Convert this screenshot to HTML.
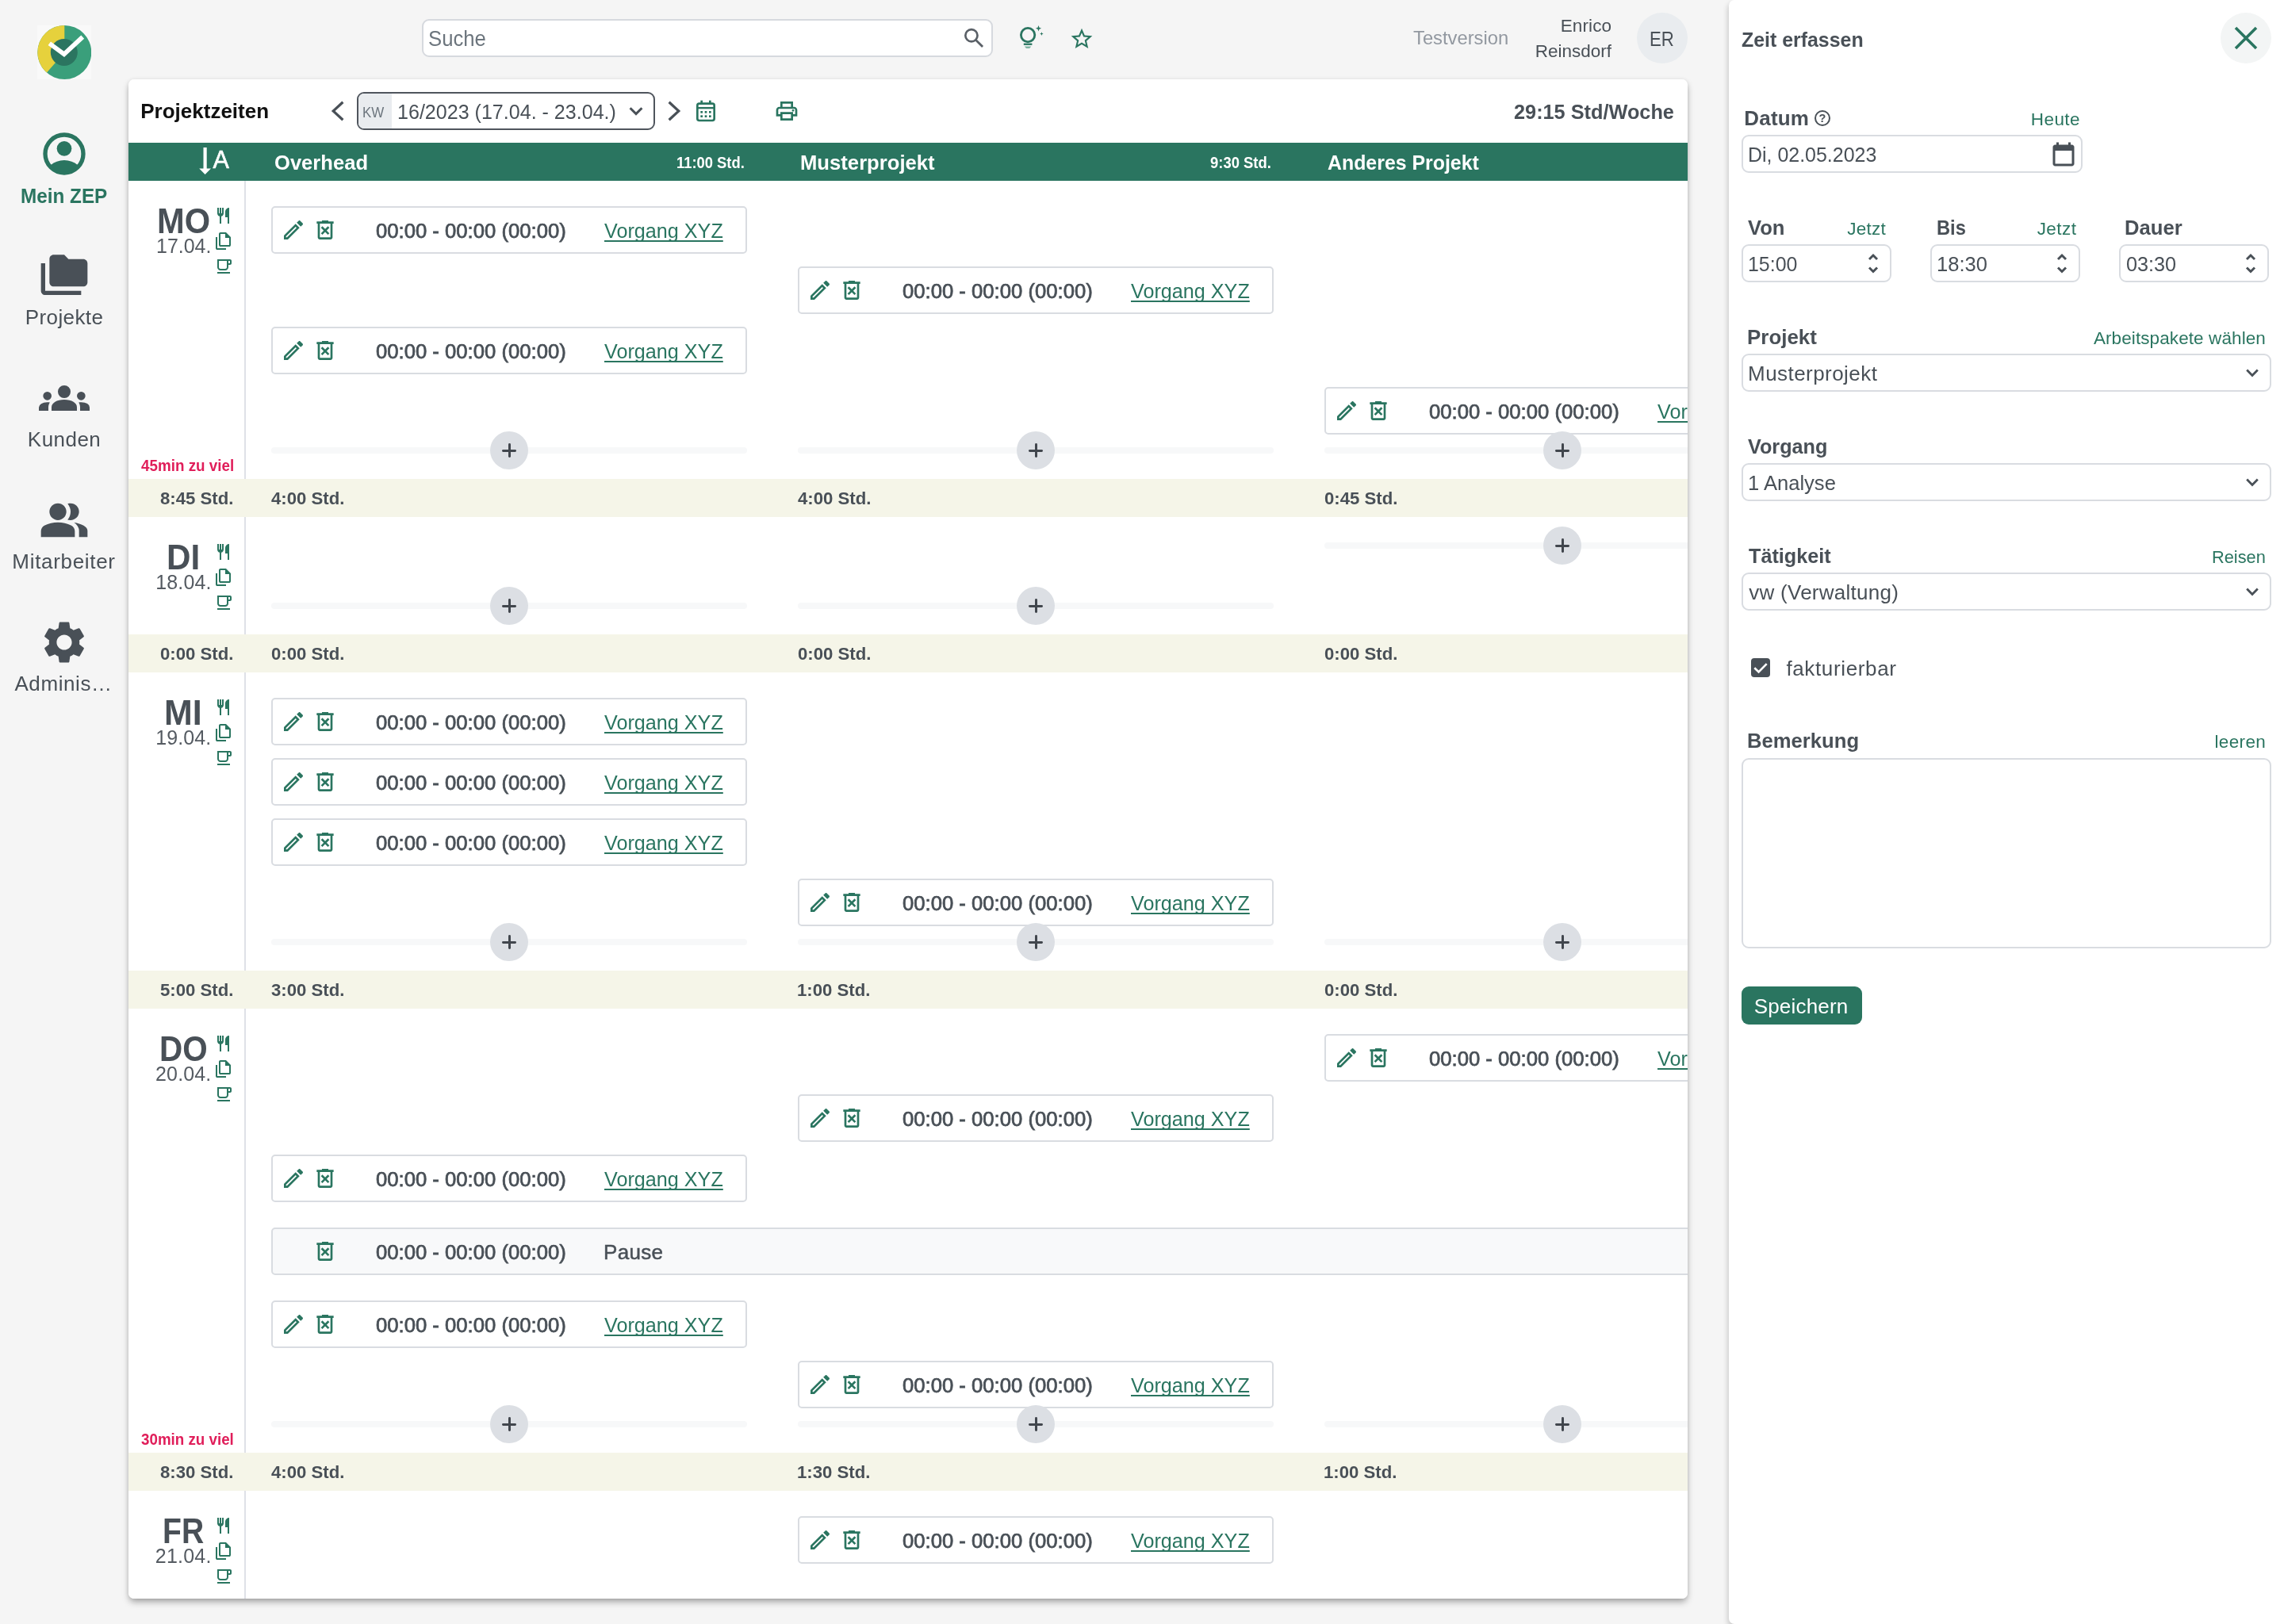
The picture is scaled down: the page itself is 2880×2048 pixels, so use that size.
<!DOCTYPE html>
<html lang="de"><head><meta charset="utf-8"><title>ZEP – Projektzeiten</title>
<style>
html,body{margin:0;padding:0}
body{width:2880px;height:2048px;overflow:hidden;background:#f5f5f5;position:relative;font-family:"Liberation Sans",sans-serif;color:#495057}
.t{position:absolute;white-space:nowrap;line-height:1;margin:0;font-weight:400;transform-origin:0 50%}
a.t{text-decoration:underline;text-decoration-thickness:1.7px;text-underline-offset:3px;text-decoration-skip-ink:none}
#card{position:absolute;left:162px;top:100px;width:1966px;height:1916px;background:#fff;border-radius:7px;overflow:hidden}
#cardsh{position:absolute;left:162px;top:100px;width:1966px;height:1916px;border-radius:7px;box-shadow:0 5px 8px -1px rgba(0,0,0,.34),0 0 5px rgba(0,0,0,.07)}
#sidebar,#topbar{position:absolute;left:0;top:0;width:0;height:0;will-change:transform}
#cardin{will-change:transform;position:absolute;left:-162px;top:-100px;width:2880px;height:2048px}
#panel{position:absolute;left:2180px;top:0;width:700px;height:2048px;background:#fff;border-radius:7px 0 0 7px;box-shadow:-1px 4px 7px rgba(0,0,0,.2)}
#panelin{will-change:transform;position:absolute;left:-2180px;top:0;width:2880px;height:2048px}
.entry{position:absolute;box-sizing:border-box;height:60px;border:2px solid #d9dce1;border-radius:5px;background:#fff}
.pause{background:#f8f9fa}
.sum{position:absolute;left:162px;width:1966px;height:48px;background:#f5f5e8}
.bar{position:absolute;height:8px;border-radius:4px;background:#f7f8f9}
.plus{position:absolute;width:48px;height:48px;border-radius:24px;background:#dcdfe4}
.plus:before,.plus:after{content:"";position:absolute;background:#41464d;border-radius:1.4px}
.plus:before{left:14.7px;top:22.5px;width:18.6px;height:3px}
.plus:after{left:22.5px;top:14.7px;width:3px;height:18.6px}
.inp{position:absolute;box-sizing:border-box;border:2px solid #d9dce1;border-radius:9px;background:#fff}
</style></head><body>

<div id="sidebar">
<svg style="position:absolute;left:47px;top:32px" width="68" height="68" viewBox="0 0 68 68">
<rect width="68" height="68" fill="#f9f9f9"/>
<circle cx="34.3" cy="34" r="34" fill="#3a9f7b"/>
<path d="M34.3 34 L34.3 0 A34 34 0 0 0 12 59.600 Z" fill="#e6d13c"/>
<circle cx="33.8" cy="34" r="17" fill="#2b7560"/>
<path d="M15.300 22.800 L33.800 36.300 L57.200 14.700" fill="none" stroke="#fff" stroke-width="5.700"/>
</svg>
<svg style="position:absolute;left:49px;top:162px;" width="64" height="64" viewBox="0 0 24 24"><circle cx="12" cy="12" r="9" fill="none" stroke="#2a7560" stroke-width="2"/><circle cx="12" cy="9.5" r="3.5" fill="#2a7560"/><clipPath id="acc"><circle cx="12" cy="12" r="8.5"/></clipPath><path clip-path="url(#acc)" d="M5.6 17.3q1.3-1 2.9-1.6Q10.200 15 12 15t3.500.7q1.600.6 2.900 1.600L19 22H5z" fill="#2a7560"/></svg>
<span class="t" style="left:26.36px;top:234px;font-size:26.0px;font-weight:700;color:#2a7560;transform:scaleX(0.9341);">Mein ZEP</span>
<svg style="position:absolute;left:49px;top:316px;" width="64" height="64" viewBox="0 0 24 24"><path d="M3 6H1v13c0 1.100.9 2 2 2h17v-2H3V6z M21 4h-7l-2-2H7c-1.100 0-1.990.9-1.990 2L5 15c0 1.100.9 2 2 2h14c1.100 0 2-.9 2-2V6c0-1.100-.9-2-2-2z" fill="#495057" /></svg>
<span class="t" style="left:31.86px;top:387px;font-size:26px;letter-spacing:0.371px;">Projekte</span>
<svg style="position:absolute;left:49px;top:470px;" width="64" height="64" viewBox="0 0 24 24"><path d="M0 18v-1.575q0-1.075 1.100-1.750Q2.200 14 4 14q.325 0 .625.012.3.013.575.063-.350.525-.525 1.100-.175.575-.175 1.200V18Zm6 0v-1.625q0-.8.438-1.463.437-.662 1.237-1.162T9.588 13q1.112-.250 2.412-.250 1.325 0 2.438.250 1.112.250 1.912.750t1.225 1.162Q18 15.575 18 16.375V18Zm13.500 0v-1.625q0-.650-.162-1.225-.163-.575-.488-1.075.275-.050.563-.063Q19.700 14 20 14q1.800 0 2.900.662 1.100.663 1.100 1.763V18ZM4 13q-.825 0-1.412-.588Q2 11.825 2 11q0-.850.588-1.425Q3.175 9 4 9q.850 0 1.425.575Q6 10.150 6 11q0 .825-.575 1.412Q4.850 13 4 13Zm16 0q-.825 0-1.412-.588Q18 11.825 18 11q0-.850.588-1.425Q19.175 9 20 9q.850 0 1.425.575Q22 10.150 22 11q0 .825-.575 1.412Q20.850 13 20 13Zm-8-1q-1.250 0-2.125-.875T9 9q0-1.275.875-2.138Q10.750 6 12 6q1.275 0 2.138.862Q15 7.725 15 9q0 1.250-.862 2.125Q13.275 12 12 12Z" fill="#495057" /></svg>
<span class="t" style="left:34.85px;top:541px;font-size:26px;letter-spacing:0.467px;">Kunden</span>
<svg style="position:absolute;left:49px;top:624px;" width="64" height="64" viewBox="0 0 24 24"><path d="M1 20v-2.8q0-.850.438-1.563.437-.712 1.162-1.087 1.550-.775 3.150-1.163Q7.350 13 9 13t3.250.387q1.600.388 3.150 1.163.725.375 1.163 1.087Q17 16.350 17 17.200V20Zm18 0v-3q0-1.100-.612-2.113-.613-1.012-1.738-1.737 1.275.150 2.400.512 1.125.363 2.100.888.9.5 1.375 1.112Q23 16.275 23 17v3Zm-10-8q-1.650 0-2.825-1.175Q5 9.650 5 8q0-1.650 1.175-2.825Q7.350 4 9 4q1.650 0 2.825 1.175Q13 6.350 13 8q0 1.650-1.175 2.825Q10.650 12 9 12Zm10-4q0 1.650-1.175 2.825Q16.650 12 15 12q-.275 0-.7-.063-.425-.062-.7-.137.675-.8 1.037-1.775Q15 9.050 15 8q0-1.050-.363-2.025Q14.275 5 13.600 4.200q.350-.125.700-.163Q14.650 4 15 4q1.650 0 2.825 1.175Q19 6.350 19 8Z" fill="#495057" /></svg>
<span class="t" style="left:15.36px;top:695px;font-size:26px;letter-spacing:0.685px;">Mitarbeiter</span>
<svg style="position:absolute;left:49px;top:778px;" width="64" height="64" viewBox="0 0 24 24"><path d="M19.14 12.94c.04-.3.06-.61.06-.94 0-.32-.02-.64-.07-.94l2.030-1.580c.18-.14.23-.41.12-.61l-1.920-3.320c-.12-.22-.37-.29-.59-.22l-2.390.96c-.5-.38-1.030-.7-1.620-.94l-.36-2.540c-.04-.24-.24-.41-.48-.41h-3.840c-.24 0-.43.17-.47.41l-.36 2.540c-.59.24-1.130.57-1.620.94l-2.390-.96c-.22-.08-.47 0-.59.22L2.740 8.870c-.12.21-.08.47.12.61l2.030 1.580c-.05.3-.09.63-.09.94s.02.64.07.94l-2.030 1.580c-.18.14-.23.41-.12.61l1.920 3.320c.12.22.37.29.59.22l2.390-.96c.5.38 1.030.7 1.620.94l.36 2.540c.05.24.24.41.48.41h3.840c.24 0 .44-.17.47-.41l.36-2.540c.59-.24 1.130-.56 1.620-.94l2.390.96c.22.08.47 0 .59-.22l1.920-3.320c.12-.22.07-.47-.12-.61l-2.010-1.580zM12 15.600c-1.980 0-3.600-1.620-3.600-3.600s1.620-3.600 3.600-3.600 3.600 1.620 3.600 3.600-1.620 3.600-3.600 3.600z" fill="#495057" /></svg>
<span class="t" style="left:18.43px;top:849px;font-size:26px;letter-spacing:0.583px;">Adminis…</span>
</div>
<div id="topbar">
<div style="position:absolute;left:532px;top:24px;width:720px;height:48px;box-sizing:border-box;border:2px solid #d6d9de;border-radius:9px;background:#fff"></div>
<span class="t" style="left:539.84px;top:36px;font-size:27px;color:#6c757d;transform:scaleX(0.9517);">Suche</span>
<svg style="position:absolute;left:1212px;top:32px;" width="32" height="32" viewBox="0 0 24 24"><circle cx="9.7" cy="9.6" r="5.7" fill="none" stroke="#5a6067" stroke-width="2"/><path d="M13.9 13.8 L20.3 20.2" stroke="#5a6067" stroke-width="2.1" fill="none"/></svg>
<svg style="position:absolute;left:1280px;top:30px;" width="36" height="36" viewBox="0 0 36 36"><circle cx="16.1" cy="14.1" r="8.7" fill="none" stroke="#2a7560" stroke-width="2.8"/><rect x="10.8" y="24.6" width="10.6" height="2.3" fill="#2a7560"/><path d="M11.8 28.5h8.600l-2.200 2.500h-4.200z" fill="#7db3a1"/><path d="M29.500 2 l1 2.700 2.700 1 -2.700 1 -1 2.700 -1-2.700 -2.700-1 2.700-1z" fill="#2a7560"/><path d="M33.400 10.300 l.65 1.650 1.650.65 -1.650.65 -.65 1.650 -.65-1.650 -1.650-.65 1.650-.65z" fill="#2a7560"/></svg>
<svg style="position:absolute;left:1348px;top:33px;" width="32" height="32" viewBox="0 0 24 24"><path d="M22 9.24l-7.190-.62L12 2 9.190 8.630 2 9.240l5.460 4.730L5.820 21 12 17.270 18.180 21l-1.630-7.030L22 9.240zM12 15.400l-3.760 2.270 1-4.280-3.320-2.880 4.380-.38L12 6.100l1.710 4.040 4.380.38-3.320 2.880 1 4.280L12 15.400z" fill="#2a7560" /></svg>
<span class="t" style="left:1782.47px;top:36px;font-size:24px;color:#9298a0;transform:scaleX(0.9904);">Testversion</span>
<span class="t" style="left:1967.74px;top:22px;font-size:22.5px;letter-spacing:0.125px;">Enrico</span>
<span class="t" style="left:1935.64px;top:54px;font-size:22.5px;letter-spacing:0.025px;">Reinsdorf</span>
<div style="position:absolute;left:2064px;top:16px;width:64px;height:64px;border-radius:32px;background:#e9ecef"></div>
<span class="t" style="left:2079.57px;top:37px;font-size:25px;transform:scaleX(0.8889);">ER</span>
</div>
<div id="cardsh"></div><div id="card"><div id="cardin">
<span class="t" style="left:177.25px;top:127px;font-size:26.0px;font-weight:700;color:#111;">Projektzeiten</span>
<svg style="position:absolute;left:414px;top:124px;" width="24" height="32" viewBox="0 0 24 32"><path d="M18.400 4.800 L6.200 16 L18.400 27.200" fill="none" stroke="#495057" stroke-width="3.2"/></svg>
<svg style="position:absolute;left:838px;top:124px;" width="24" height="32" viewBox="0 0 24 32"><path d="M5.600 4.800 L17.800 16 L5.600 27.200" fill="none" stroke="#495057" stroke-width="3.2"/></svg>
<div style="position:absolute;left:450px;top:116px;width:376px;height:48px;box-sizing:border-box;border:2px solid #4f555d;border-radius:9px;overflow:hidden;background:#fff"><div style="position:absolute;left:0;top:0;width:42px;height:44px;background:#e9ecef"></div></div>
<span class="t" style="left:457.40px;top:132px;font-size:19px;color:#6c757d;transform:scaleX(0.8904);">KW</span>
<span class="t" style="left:501.12px;top:128px;font-size:26px;transform:scaleX(0.9640);">16/2023 (17.04. - 23.04.)</span>
<svg style="position:absolute;left:790px;top:128px;" width="24" height="24" viewBox="0 0 24 24"><path d="M4.600 8.200 L12 15.600 L19.400 8.200" fill="none" stroke="#495057" stroke-width="3"/></svg>
<svg style="position:absolute;left:874px;top:124px;" width="32" height="32" viewBox="0 0 24 24"><rect x="4" y="5" width="16" height="16" rx="1.800" fill="none" stroke="#2a7560" stroke-width="2"/><rect x="4" y="8.200" width="16" height="1.800" fill="#2a7560"/><rect x="7" y="2" width="2" height="4" fill="#2a7560"/><rect x="15" y="2" width="2" height="4" fill="#2a7560"/><rect x="7" y="12" width="2" height="2" fill="#2a7560"/><rect x="11" y="12" width="2" height="2" fill="#2a7560"/><rect x="15" y="12" width="2" height="2" fill="#2a7560"/><rect x="7" y="16" width="2" height="2" fill="#2a7560"/><rect x="11" y="16" width="2" height="2" fill="#2a7560"/><rect x="15" y="16" width="2" height="2" fill="#2a7560"/></svg>
<svg style="position:absolute;left:976px;top:124px;" width="32" height="32" viewBox="0 0 24 24"><path d="M19 8h-1V3H6v5H5c-1.660 0-3 1.340-3 3v6h4v4h12v-4h4v-6c0-1.660-1.340-3-3-3zM8 5h8v3H8V5zm8 12v2H8v-4h8v2zm2-2v-2H6v2H4v-4c0-.550.450-1 1-1h14c.550 0 1 .450 1 1v4h-2z" fill="#2a7560" /><circle cx="18" cy="11.500" r="1" fill="#2a7560"/></svg>
<span class="t" style="left:1909.41px;top:128px;font-size:26.0px;font-weight:700;transform:scaleX(0.9728);">29:15 Std/Woche</span>
<div style="position:absolute;left:162px;top:180px;width:1966px;height:48px;background:#2a7560"></div>
<svg style="position:absolute;left:247.6px;top:184px;" width="20" height="38" viewBox="0 0 20 38"><path d="M8.500 2h4.200v26.500h5.300L10.600 36 3.200 28.500h5.300z" fill="#fff"/></svg>
<span class="t" style="left:268.52px;top:186px;font-size:30.5px;color:#fff;-webkit-text-stroke:0.6px currentColor;">A</span>
<span class="t" style="left:345.68px;top:192px;font-size:26.0px;font-weight:700;color:#fff;transform:scaleX(0.9838);">Overhead</span>
<span class="t" style="left:852.85px;top:196px;font-size:19.5px;font-weight:700;color:#fff;transform:scaleX(0.9421);">11:00 Std.</span>
<span class="t" style="left:1009.27px;top:192px;font-size:26.0px;font-weight:700;color:#fff;transform:scaleX(0.9868);">Musterprojekt</span>
<span class="t" style="left:1526.35px;top:196px;font-size:19.5px;font-weight:700;color:#fff;transform:scaleX(0.9462);">9:30 Std.</span>
<span class="t" style="left:1673.68px;top:192px;font-size:26.0px;font-weight:700;color:#fff;transform:scaleX(0.9569);">Anderes Projekt</span>
<div style="position:absolute;left:308px;top:228px;width:2px;height:1800px;background:#dfe1e7"></div>
<span class="t" style="left:197.69px;top:256px;font-size:45.0px;font-weight:700;transform:scaleX(0.9259);">MO</span>
<span class="t" style="left:196.63px;top:298px;font-size:25px;color:#555b62;transform:scaleX(0.9989);">17.04.</span>
<svg style="position:absolute;left:270px;top:260px;" width="24" height="24" viewBox="0 0 24 24"><path d="M7 22v-9.15q-1.275-.35-2.137-1.4Q4 10.4 4 9V2h2v7h1V2h2v7h1V2h2v7q0 1.4-.863 2.450Q10.275 12.500 9 12.850V22Zm10 0v-8h-3V7q0-2.075 1.463-3.537Q16.925 2 19 2v20Z" fill="#2a7560" /></svg>
<svg style="position:absolute;left:270px;top:292px;" width="24" height="24" viewBox="0 0 24 24"><path d="M8 1h7l6 6v10q0 .83-.59 1.410Q19.830 19 19 19H8q-.830 0-1.410-.590Q6 17.830 6 17V3q0-.830.590-1.410Q7.170 1 8 1zm0 2v14h11V8h-5V3zM2 7h2v14h11v2H4q-.830 0-1.410-.590Q2 21.830 2 21z" fill="#2a7560" /></svg>
<svg style="position:absolute;left:270px;top:324px;" width="24" height="24" viewBox="0 0 24 24"><path d="M4 19h16v2H4zM20 3H4v10c0 2.210 1.790 4 4 4h6c2.210 0 4-1.790 4-4v-3h2c1.110 0 2-.9 2-2V5c0-1.110-.890-2-2-2zm-4 10c0 1.100-.9 2-2 2H8c-1.100 0-2-.9-2-2V5h10v8zm4-5h-2V5h2v3z" fill="#2a7560" /></svg>
<div class="entry" style="left:342px;top:260px;width:600px"></div>
<svg style="position:absolute;left:354px;top:274px;" width="32" height="32" viewBox="0 0 24 24"><path d="M14.06 9.02l.92.92L5.92 19H5v-.92l9.06-9.06M17.66 3c-.25 0-.51.1-.7.29l-1.83 1.83 3.75 3.75 1.83-1.83c.39-.39.39-1.02 0-1.41l-2.34-2.34c-.2-.2-.45-.29-.71-.29zm-3.6 3.19L3 17.25V21h3.75L17.81 9.94l-3.75-3.75z" fill="#2a7560" /></svg>
<svg style="position:absolute;left:394px;top:274px;" width="32" height="32" viewBox="0 0 24 24"><path d="M9 3h6v1h5v2h-1v13q0 .83-.59 1.41Q17.83 21 17 21H7q-.83 0-1.41-.59Q5 19.830 5 19V6H4V4h5zM7 6v13h10V6zM9.4 16.5L8 15.1l2.6-2.6L8 9.9l1.4-1.4 2.6 2.6 2.6-2.6L16 9.900l-2.600 2.600 2.600 2.600-1.400 1.400-2.600-2.600z" fill="#2a7560" /></svg>
<span class="t" style="left:473.74px;top:278px;font-size:26px;transform:scaleX(0.9872);-webkit-text-stroke:0.75px currentColor;">00:00 - 00:00 (00:00)</span>
<a class="t" style="left:761.87px;top:278px;font-size:26px;color:#2a7560;transform:scaleX(0.9686);">Vorgang XYZ</a>
<div class="entry" style="left:1006px;top:336px;width:600px"></div>
<svg style="position:absolute;left:1018px;top:350px;" width="32" height="32" viewBox="0 0 24 24"><path d="M14.06 9.02l.92.92L5.92 19H5v-.92l9.06-9.06M17.66 3c-.25 0-.51.1-.7.29l-1.83 1.83 3.75 3.75 1.83-1.83c.39-.39.39-1.02 0-1.41l-2.34-2.34c-.2-.2-.45-.29-.71-.29zm-3.6 3.19L3 17.25V21h3.75L17.81 9.94l-3.75-3.75z" fill="#2a7560" /></svg>
<svg style="position:absolute;left:1058px;top:350px;" width="32" height="32" viewBox="0 0 24 24"><path d="M9 3h6v1h5v2h-1v13q0 .83-.59 1.41Q17.83 21 17 21H7q-.83 0-1.41-.59Q5 19.830 5 19V6H4V4h5zM7 6v13h10V6zM9.4 16.5L8 15.1l2.6-2.6L8 9.9l1.4-1.4 2.6 2.6 2.6-2.6L16 9.900l-2.600 2.600 2.600 2.600-1.400 1.400-2.600-2.600z" fill="#2a7560" /></svg>
<span class="t" style="left:1137.74px;top:354px;font-size:26px;transform:scaleX(0.9872);-webkit-text-stroke:0.75px currentColor;">00:00 - 00:00 (00:00)</span>
<a class="t" style="left:1425.87px;top:354px;font-size:26px;color:#2a7560;transform:scaleX(0.9686);">Vorgang XYZ</a>
<div class="entry" style="left:342px;top:412px;width:600px"></div>
<svg style="position:absolute;left:354px;top:426px;" width="32" height="32" viewBox="0 0 24 24"><path d="M14.06 9.02l.92.92L5.92 19H5v-.92l9.06-9.06M17.66 3c-.25 0-.51.1-.7.29l-1.83 1.83 3.75 3.75 1.83-1.83c.39-.39.39-1.02 0-1.41l-2.34-2.34c-.2-.2-.45-.29-.71-.29zm-3.6 3.19L3 17.25V21h3.75L17.81 9.94l-3.75-3.75z" fill="#2a7560" /></svg>
<svg style="position:absolute;left:394px;top:426px;" width="32" height="32" viewBox="0 0 24 24"><path d="M9 3h6v1h5v2h-1v13q0 .83-.59 1.41Q17.83 21 17 21H7q-.83 0-1.41-.59Q5 19.830 5 19V6H4V4h5zM7 6v13h10V6zM9.4 16.5L8 15.1l2.6-2.6L8 9.9l1.4-1.4 2.6 2.6 2.6-2.6L16 9.900l-2.600 2.600 2.600 2.600-1.400 1.400-2.600-2.600z" fill="#2a7560" /></svg>
<span class="t" style="left:473.74px;top:430px;font-size:26px;transform:scaleX(0.9872);-webkit-text-stroke:0.75px currentColor;">00:00 - 00:00 (00:00)</span>
<a class="t" style="left:761.87px;top:430px;font-size:26px;color:#2a7560;transform:scaleX(0.9686);">Vorgang XYZ</a>
<div class="entry" style="left:1670px;top:488px;width:600px"></div>
<svg style="position:absolute;left:1682px;top:502px;" width="32" height="32" viewBox="0 0 24 24"><path d="M14.06 9.02l.92.92L5.92 19H5v-.92l9.06-9.06M17.66 3c-.25 0-.51.1-.7.29l-1.83 1.83 3.75 3.75 1.83-1.83c.39-.39.39-1.02 0-1.41l-2.34-2.34c-.2-.2-.45-.29-.71-.29zm-3.6 3.19L3 17.25V21h3.75L17.81 9.94l-3.75-3.75z" fill="#2a7560" /></svg>
<svg style="position:absolute;left:1722px;top:502px;" width="32" height="32" viewBox="0 0 24 24"><path d="M9 3h6v1h5v2h-1v13q0 .83-.59 1.41Q17.83 21 17 21H7q-.83 0-1.41-.59Q5 19.830 5 19V6H4V4h5zM7 6v13h10V6zM9.4 16.5L8 15.1l2.6-2.6L8 9.9l1.4-1.4 2.6 2.6 2.6-2.6L16 9.900l-2.600 2.600 2.600 2.600-1.400 1.400-2.600-2.600z" fill="#2a7560" /></svg>
<span class="t" style="left:1801.74px;top:506px;font-size:26px;transform:scaleX(0.9872);-webkit-text-stroke:0.75px currentColor;">00:00 - 00:00 (00:00)</span>
<a class="t" style="left:2089.87px;top:506px;font-size:26px;color:#2a7560;transform:scaleX(0.9686);">Vorgang XYZ</a>
<div class="bar" style="left:342px;top:564px;width:600px"></div>
<div class="plus" style="left:618px;top:544px"></div>
<div class="bar" style="left:1006px;top:564px;width:600px"></div>
<div class="plus" style="left:1282px;top:544px"></div>
<div class="bar" style="left:1670px;top:564px;width:600px"></div>
<div class="plus" style="left:1946px;top:544px"></div>
<span class="t" style="left:178.12px;top:578px;font-size:19.5px;font-weight:700;color:#e01e5a;transform:scaleX(0.9655);">45min zu viel</span>
<div class="sum" style="top:604px"></div>
<span class="t" style="left:202.13px;top:618px;font-size:22.5px;font-weight:700;transform:scaleX(0.9850);">8:45 Std.</span>
<span class="t" style="left:342.37px;top:618px;font-size:22.5px;font-weight:700;transform:scaleX(0.9850);">4:00 Std.</span>
<span class="t" style="left:1006.37px;top:618px;font-size:22.5px;font-weight:700;transform:scaleX(0.9850);">4:00 Std.</span>
<span class="t" style="left:1669.81px;top:618px;font-size:22.5px;font-weight:700;transform:scaleX(0.9850);">0:45 Std.</span>
<span class="t" style="left:209.65px;top:680px;font-size:45.0px;font-weight:700;transform:scaleX(0.9377);">DI</span>
<span class="t" style="left:196.32px;top:722px;font-size:25px;color:#555b62;letter-spacing:0.125px;">18.04.</span>
<svg style="position:absolute;left:270px;top:684px;" width="24" height="24" viewBox="0 0 24 24"><path d="M7 22v-9.15q-1.275-.35-2.137-1.4Q4 10.4 4 9V2h2v7h1V2h2v7h1V2h2v7q0 1.4-.863 2.450Q10.275 12.500 9 12.850V22Zm10 0v-8h-3V7q0-2.075 1.463-3.537Q16.925 2 19 2v20Z" fill="#2a7560" /></svg>
<svg style="position:absolute;left:270px;top:716px;" width="24" height="24" viewBox="0 0 24 24"><path d="M8 1h7l6 6v10q0 .83-.59 1.410Q19.830 19 19 19H8q-.830 0-1.410-.590Q6 17.830 6 17V3q0-.830.590-1.410Q7.170 1 8 1zm0 2v14h11V8h-5V3zM2 7h2v14h11v2H4q-.830 0-1.410-.590Q2 21.830 2 21z" fill="#2a7560" /></svg>
<svg style="position:absolute;left:270px;top:748px;" width="24" height="24" viewBox="0 0 24 24"><path d="M4 19h16v2H4zM20 3H4v10c0 2.210 1.790 4 4 4h6c2.210 0 4-1.790 4-4v-3h2c1.110 0 2-.9 2-2V5c0-1.110-.890-2-2-2zm-4 10c0 1.100-.9 2-2 2H8c-1.100 0-2-.9-2-2V5h10v8zm4-5h-2V5h2v3z" fill="#2a7560" /></svg>
<div class="bar" style="left:1670px;top:684px;width:600px"></div>
<div class="plus" style="left:1946px;top:664px"></div>
<div class="bar" style="left:342px;top:760px;width:600px"></div>
<div class="plus" style="left:618px;top:740px"></div>
<div class="bar" style="left:1006px;top:760px;width:600px"></div>
<div class="plus" style="left:1282px;top:740px"></div>
<div class="sum" style="top:800px"></div>
<span class="t" style="left:202.13px;top:814px;font-size:22.5px;font-weight:700;transform:scaleX(0.9850);">0:00 Std.</span>
<span class="t" style="left:341.81px;top:814px;font-size:22.5px;font-weight:700;transform:scaleX(0.9850);">0:00 Std.</span>
<span class="t" style="left:1005.81px;top:814px;font-size:22.5px;font-weight:700;transform:scaleX(0.9850);">0:00 Std.</span>
<span class="t" style="left:1669.81px;top:814px;font-size:22.5px;font-weight:700;transform:scaleX(0.9850);">0:00 Std.</span>
<span class="t" style="left:207.21px;top:876px;font-size:45.0px;font-weight:700;transform:scaleX(0.9527);">MI</span>
<span class="t" style="left:196.22px;top:918px;font-size:25px;color:#555b62;letter-spacing:0.105px;">19.04.</span>
<svg style="position:absolute;left:270px;top:880px;" width="24" height="24" viewBox="0 0 24 24"><path d="M7 22v-9.15q-1.275-.35-2.137-1.4Q4 10.4 4 9V2h2v7h1V2h2v7h1V2h2v7q0 1.4-.863 2.450Q10.275 12.500 9 12.850V22Zm10 0v-8h-3V7q0-2.075 1.463-3.537Q16.925 2 19 2v20Z" fill="#2a7560" /></svg>
<svg style="position:absolute;left:270px;top:912px;" width="24" height="24" viewBox="0 0 24 24"><path d="M8 1h7l6 6v10q0 .83-.59 1.410Q19.830 19 19 19H8q-.830 0-1.410-.590Q6 17.830 6 17V3q0-.830.590-1.410Q7.170 1 8 1zm0 2v14h11V8h-5V3zM2 7h2v14h11v2H4q-.830 0-1.410-.590Q2 21.830 2 21z" fill="#2a7560" /></svg>
<svg style="position:absolute;left:270px;top:944px;" width="24" height="24" viewBox="0 0 24 24"><path d="M4 19h16v2H4zM20 3H4v10c0 2.210 1.790 4 4 4h6c2.210 0 4-1.790 4-4v-3h2c1.110 0 2-.9 2-2V5c0-1.110-.890-2-2-2zm-4 10c0 1.100-.9 2-2 2H8c-1.100 0-2-.9-2-2V5h10v8zm4-5h-2V5h2v3z" fill="#2a7560" /></svg>
<div class="entry" style="left:342px;top:880px;width:600px"></div>
<svg style="position:absolute;left:354px;top:894px;" width="32" height="32" viewBox="0 0 24 24"><path d="M14.06 9.02l.92.92L5.92 19H5v-.92l9.06-9.06M17.66 3c-.25 0-.51.1-.7.29l-1.83 1.83 3.75 3.75 1.83-1.83c.39-.39.39-1.02 0-1.41l-2.34-2.34c-.2-.2-.45-.29-.71-.29zm-3.6 3.19L3 17.25V21h3.75L17.81 9.94l-3.75-3.75z" fill="#2a7560" /></svg>
<svg style="position:absolute;left:394px;top:894px;" width="32" height="32" viewBox="0 0 24 24"><path d="M9 3h6v1h5v2h-1v13q0 .83-.59 1.41Q17.83 21 17 21H7q-.83 0-1.41-.59Q5 19.830 5 19V6H4V4h5zM7 6v13h10V6zM9.4 16.5L8 15.1l2.6-2.6L8 9.9l1.4-1.4 2.6 2.6 2.6-2.6L16 9.900l-2.600 2.600 2.600 2.600-1.400 1.400-2.600-2.600z" fill="#2a7560" /></svg>
<span class="t" style="left:473.74px;top:898px;font-size:26px;transform:scaleX(0.9872);-webkit-text-stroke:0.75px currentColor;">00:00 - 00:00 (00:00)</span>
<a class="t" style="left:761.87px;top:898px;font-size:26px;color:#2a7560;transform:scaleX(0.9686);">Vorgang XYZ</a>
<div class="entry" style="left:342px;top:956px;width:600px"></div>
<svg style="position:absolute;left:354px;top:970px;" width="32" height="32" viewBox="0 0 24 24"><path d="M14.06 9.02l.92.92L5.92 19H5v-.92l9.06-9.06M17.66 3c-.25 0-.51.1-.7.29l-1.83 1.83 3.75 3.75 1.83-1.83c.39-.39.39-1.02 0-1.41l-2.34-2.34c-.2-.2-.45-.29-.71-.29zm-3.6 3.19L3 17.25V21h3.75L17.81 9.94l-3.75-3.75z" fill="#2a7560" /></svg>
<svg style="position:absolute;left:394px;top:970px;" width="32" height="32" viewBox="0 0 24 24"><path d="M9 3h6v1h5v2h-1v13q0 .83-.59 1.41Q17.83 21 17 21H7q-.83 0-1.41-.59Q5 19.830 5 19V6H4V4h5zM7 6v13h10V6zM9.4 16.5L8 15.1l2.6-2.6L8 9.9l1.4-1.4 2.6 2.6 2.6-2.6L16 9.900l-2.600 2.600 2.600 2.600-1.400 1.400-2.600-2.600z" fill="#2a7560" /></svg>
<span class="t" style="left:473.74px;top:974px;font-size:26px;transform:scaleX(0.9872);-webkit-text-stroke:0.75px currentColor;">00:00 - 00:00 (00:00)</span>
<a class="t" style="left:761.87px;top:974px;font-size:26px;color:#2a7560;transform:scaleX(0.9686);">Vorgang XYZ</a>
<div class="entry" style="left:342px;top:1032px;width:600px"></div>
<svg style="position:absolute;left:354px;top:1046px;" width="32" height="32" viewBox="0 0 24 24"><path d="M14.06 9.02l.92.92L5.92 19H5v-.92l9.06-9.06M17.66 3c-.25 0-.51.1-.7.29l-1.83 1.83 3.75 3.75 1.83-1.83c.39-.39.39-1.02 0-1.41l-2.34-2.34c-.2-.2-.45-.29-.71-.29zm-3.6 3.19L3 17.25V21h3.75L17.81 9.94l-3.75-3.75z" fill="#2a7560" /></svg>
<svg style="position:absolute;left:394px;top:1046px;" width="32" height="32" viewBox="0 0 24 24"><path d="M9 3h6v1h5v2h-1v13q0 .83-.59 1.41Q17.83 21 17 21H7q-.83 0-1.41-.59Q5 19.830 5 19V6H4V4h5zM7 6v13h10V6zM9.4 16.5L8 15.1l2.6-2.6L8 9.9l1.4-1.4 2.6 2.6 2.6-2.6L16 9.900l-2.600 2.600 2.600 2.600-1.400 1.400-2.600-2.600z" fill="#2a7560" /></svg>
<span class="t" style="left:473.74px;top:1050px;font-size:26px;transform:scaleX(0.9872);-webkit-text-stroke:0.75px currentColor;">00:00 - 00:00 (00:00)</span>
<a class="t" style="left:761.87px;top:1050px;font-size:26px;color:#2a7560;transform:scaleX(0.9686);">Vorgang XYZ</a>
<div class="entry" style="left:1006px;top:1108px;width:600px"></div>
<svg style="position:absolute;left:1018px;top:1122px;" width="32" height="32" viewBox="0 0 24 24"><path d="M14.06 9.02l.92.92L5.92 19H5v-.92l9.06-9.06M17.66 3c-.25 0-.51.1-.7.29l-1.83 1.83 3.75 3.75 1.83-1.83c.39-.39.39-1.02 0-1.41l-2.34-2.34c-.2-.2-.45-.29-.71-.29zm-3.6 3.19L3 17.25V21h3.75L17.81 9.94l-3.75-3.75z" fill="#2a7560" /></svg>
<svg style="position:absolute;left:1058px;top:1122px;" width="32" height="32" viewBox="0 0 24 24"><path d="M9 3h6v1h5v2h-1v13q0 .83-.59 1.41Q17.83 21 17 21H7q-.83 0-1.41-.59Q5 19.830 5 19V6H4V4h5zM7 6v13h10V6zM9.4 16.5L8 15.1l2.6-2.6L8 9.9l1.4-1.4 2.6 2.6 2.6-2.6L16 9.900l-2.600 2.600 2.600 2.600-1.400 1.400-2.600-2.600z" fill="#2a7560" /></svg>
<span class="t" style="left:1137.74px;top:1126px;font-size:26px;transform:scaleX(0.9872);-webkit-text-stroke:0.75px currentColor;">00:00 - 00:00 (00:00)</span>
<a class="t" style="left:1425.87px;top:1126px;font-size:26px;color:#2a7560;transform:scaleX(0.9686);">Vorgang XYZ</a>
<div class="bar" style="left:342px;top:1184px;width:600px"></div>
<div class="plus" style="left:618px;top:1164px"></div>
<div class="bar" style="left:1006px;top:1184px;width:600px"></div>
<div class="plus" style="left:1282px;top:1164px"></div>
<div class="bar" style="left:1670px;top:1184px;width:600px"></div>
<div class="plus" style="left:1946px;top:1164px"></div>
<div class="sum" style="top:1224px"></div>
<span class="t" style="left:202.13px;top:1238px;font-size:22.5px;font-weight:700;transform:scaleX(0.9850);">5:00 Std.</span>
<span class="t" style="left:342.20px;top:1238px;font-size:22.5px;font-weight:700;transform:scaleX(0.9850);">3:00 Std.</span>
<span class="t" style="left:1005.31px;top:1238px;font-size:22.5px;font-weight:700;transform:scaleX(0.9850);">1:00 Std.</span>
<span class="t" style="left:1669.81px;top:1238px;font-size:22.5px;font-weight:700;transform:scaleX(0.9850);">0:00 Std.</span>
<span class="t" style="left:200.87px;top:1300px;font-size:45.0px;font-weight:700;transform:scaleX(0.8985);">DO</span>
<span class="t" style="left:196.05px;top:1342px;font-size:25px;color:#555b62;letter-spacing:0.140px;">20.04.</span>
<svg style="position:absolute;left:270px;top:1304px;" width="24" height="24" viewBox="0 0 24 24"><path d="M7 22v-9.15q-1.275-.35-2.137-1.4Q4 10.4 4 9V2h2v7h1V2h2v7h1V2h2v7q0 1.4-.863 2.450Q10.275 12.500 9 12.850V22Zm10 0v-8h-3V7q0-2.075 1.463-3.537Q16.925 2 19 2v20Z" fill="#2a7560" /></svg>
<svg style="position:absolute;left:270px;top:1336px;" width="24" height="24" viewBox="0 0 24 24"><path d="M8 1h7l6 6v10q0 .83-.59 1.410Q19.830 19 19 19H8q-.830 0-1.410-.590Q6 17.830 6 17V3q0-.830.590-1.410Q7.170 1 8 1zm0 2v14h11V8h-5V3zM2 7h2v14h11v2H4q-.830 0-1.410-.590Q2 21.830 2 21z" fill="#2a7560" /></svg>
<svg style="position:absolute;left:270px;top:1368px;" width="24" height="24" viewBox="0 0 24 24"><path d="M4 19h16v2H4zM20 3H4v10c0 2.210 1.790 4 4 4h6c2.210 0 4-1.790 4-4v-3h2c1.110 0 2-.9 2-2V5c0-1.110-.890-2-2-2zm-4 10c0 1.100-.9 2-2 2H8c-1.100 0-2-.9-2-2V5h10v8zm4-5h-2V5h2v3z" fill="#2a7560" /></svg>
<div class="entry" style="left:1670px;top:1304px;width:600px"></div>
<svg style="position:absolute;left:1682px;top:1318px;" width="32" height="32" viewBox="0 0 24 24"><path d="M14.06 9.02l.92.92L5.92 19H5v-.92l9.06-9.06M17.66 3c-.25 0-.51.1-.7.29l-1.83 1.83 3.75 3.75 1.83-1.83c.39-.39.39-1.02 0-1.41l-2.34-2.34c-.2-.2-.45-.29-.71-.29zm-3.6 3.19L3 17.25V21h3.75L17.81 9.94l-3.75-3.75z" fill="#2a7560" /></svg>
<svg style="position:absolute;left:1722px;top:1318px;" width="32" height="32" viewBox="0 0 24 24"><path d="M9 3h6v1h5v2h-1v13q0 .83-.59 1.41Q17.83 21 17 21H7q-.83 0-1.41-.59Q5 19.830 5 19V6H4V4h5zM7 6v13h10V6zM9.4 16.5L8 15.1l2.6-2.6L8 9.9l1.4-1.4 2.6 2.6 2.6-2.6L16 9.900l-2.600 2.600 2.600 2.600-1.400 1.400-2.600-2.600z" fill="#2a7560" /></svg>
<span class="t" style="left:1801.74px;top:1322px;font-size:26px;transform:scaleX(0.9872);-webkit-text-stroke:0.75px currentColor;">00:00 - 00:00 (00:00)</span>
<a class="t" style="left:2089.87px;top:1322px;font-size:26px;color:#2a7560;transform:scaleX(0.9686);">Vorgang XYZ</a>
<div class="entry" style="left:1006px;top:1380px;width:600px"></div>
<svg style="position:absolute;left:1018px;top:1394px;" width="32" height="32" viewBox="0 0 24 24"><path d="M14.06 9.02l.92.92L5.92 19H5v-.92l9.06-9.06M17.66 3c-.25 0-.51.1-.7.29l-1.83 1.83 3.75 3.75 1.83-1.83c.39-.39.39-1.02 0-1.41l-2.34-2.34c-.2-.2-.45-.29-.71-.29zm-3.6 3.19L3 17.25V21h3.75L17.81 9.94l-3.75-3.75z" fill="#2a7560" /></svg>
<svg style="position:absolute;left:1058px;top:1394px;" width="32" height="32" viewBox="0 0 24 24"><path d="M9 3h6v1h5v2h-1v13q0 .83-.59 1.41Q17.83 21 17 21H7q-.83 0-1.41-.59Q5 19.830 5 19V6H4V4h5zM7 6v13h10V6zM9.4 16.5L8 15.1l2.6-2.6L8 9.9l1.4-1.4 2.6 2.6 2.6-2.6L16 9.900l-2.600 2.600 2.600 2.600-1.400 1.400-2.600-2.600z" fill="#2a7560" /></svg>
<span class="t" style="left:1137.74px;top:1398px;font-size:26px;transform:scaleX(0.9872);-webkit-text-stroke:0.75px currentColor;">00:00 - 00:00 (00:00)</span>
<a class="t" style="left:1425.87px;top:1398px;font-size:26px;color:#2a7560;transform:scaleX(0.9686);">Vorgang XYZ</a>
<div class="entry" style="left:342px;top:1456px;width:600px"></div>
<svg style="position:absolute;left:354px;top:1470px;" width="32" height="32" viewBox="0 0 24 24"><path d="M14.06 9.02l.92.92L5.92 19H5v-.92l9.06-9.06M17.66 3c-.25 0-.51.1-.7.29l-1.83 1.83 3.75 3.75 1.83-1.83c.39-.39.39-1.02 0-1.41l-2.34-2.34c-.2-.2-.45-.29-.71-.29zm-3.6 3.19L3 17.25V21h3.75L17.81 9.94l-3.75-3.75z" fill="#2a7560" /></svg>
<svg style="position:absolute;left:394px;top:1470px;" width="32" height="32" viewBox="0 0 24 24"><path d="M9 3h6v1h5v2h-1v13q0 .83-.59 1.41Q17.83 21 17 21H7q-.83 0-1.41-.59Q5 19.830 5 19V6H4V4h5zM7 6v13h10V6zM9.4 16.5L8 15.1l2.6-2.6L8 9.9l1.4-1.4 2.6 2.6 2.6-2.6L16 9.900l-2.600 2.600 2.600 2.600-1.400 1.400-2.600-2.600z" fill="#2a7560" /></svg>
<span class="t" style="left:473.74px;top:1474px;font-size:26px;transform:scaleX(0.9872);-webkit-text-stroke:0.75px currentColor;">00:00 - 00:00 (00:00)</span>
<a class="t" style="left:761.87px;top:1474px;font-size:26px;color:#2a7560;transform:scaleX(0.9686);">Vorgang XYZ</a>
<div class="entry pause" style="left:342px;top:1548px;width:1800px"></div>
<svg style="position:absolute;left:394px;top:1562px;" width="32" height="32" viewBox="0 0 24 24"><path d="M9 3h6v1h5v2h-1v13q0 .83-.59 1.41Q17.83 21 17 21H7q-.83 0-1.41-.59Q5 19.830 5 19V6H4V4h5zM7 6v13h10V6zM9.4 16.5L8 15.1l2.6-2.6L8 9.9l1.4-1.4 2.6 2.6 2.6-2.6L16 9.900l-2.600 2.600 2.600 2.600-1.400 1.400-2.600-2.600z" fill="#2a7560" /></svg>
<span class="t" style="left:473.74px;top:1566px;font-size:26px;transform:scaleX(0.9872);-webkit-text-stroke:0.75px currentColor;">00:00 - 00:00 (00:00)</span>
<span class="t" style="left:761.11px;top:1566px;font-size:26px;letter-spacing:0.260px;-webkit-text-stroke:0.5px currentColor;">Pause</span>
<div class="entry" style="left:342px;top:1640px;width:600px"></div>
<svg style="position:absolute;left:354px;top:1654px;" width="32" height="32" viewBox="0 0 24 24"><path d="M14.06 9.02l.92.92L5.92 19H5v-.92l9.06-9.06M17.66 3c-.25 0-.51.1-.7.29l-1.83 1.83 3.75 3.75 1.83-1.83c.39-.39.39-1.02 0-1.41l-2.34-2.34c-.2-.2-.45-.29-.71-.29zm-3.6 3.19L3 17.25V21h3.75L17.81 9.94l-3.75-3.75z" fill="#2a7560" /></svg>
<svg style="position:absolute;left:394px;top:1654px;" width="32" height="32" viewBox="0 0 24 24"><path d="M9 3h6v1h5v2h-1v13q0 .83-.59 1.41Q17.83 21 17 21H7q-.83 0-1.41-.59Q5 19.830 5 19V6H4V4h5zM7 6v13h10V6zM9.4 16.5L8 15.1l2.6-2.6L8 9.9l1.4-1.4 2.6 2.6 2.6-2.6L16 9.900l-2.600 2.600 2.600 2.600-1.400 1.400-2.600-2.600z" fill="#2a7560" /></svg>
<span class="t" style="left:473.74px;top:1658px;font-size:26px;transform:scaleX(0.9872);-webkit-text-stroke:0.75px currentColor;">00:00 - 00:00 (00:00)</span>
<a class="t" style="left:761.87px;top:1658px;font-size:26px;color:#2a7560;transform:scaleX(0.9686);">Vorgang XYZ</a>
<div class="entry" style="left:1006px;top:1716px;width:600px"></div>
<svg style="position:absolute;left:1018px;top:1730px;" width="32" height="32" viewBox="0 0 24 24"><path d="M14.06 9.02l.92.92L5.92 19H5v-.92l9.06-9.06M17.66 3c-.25 0-.51.1-.7.29l-1.83 1.83 3.75 3.75 1.83-1.83c.39-.39.39-1.02 0-1.41l-2.34-2.34c-.2-.2-.45-.29-.71-.29zm-3.6 3.19L3 17.25V21h3.75L17.81 9.94l-3.75-3.75z" fill="#2a7560" /></svg>
<svg style="position:absolute;left:1058px;top:1730px;" width="32" height="32" viewBox="0 0 24 24"><path d="M9 3h6v1h5v2h-1v13q0 .83-.59 1.41Q17.83 21 17 21H7q-.83 0-1.41-.59Q5 19.830 5 19V6H4V4h5zM7 6v13h10V6zM9.4 16.5L8 15.1l2.6-2.6L8 9.9l1.4-1.4 2.6 2.6 2.6-2.6L16 9.900l-2.600 2.600 2.600 2.600-1.400 1.400-2.600-2.600z" fill="#2a7560" /></svg>
<span class="t" style="left:1137.74px;top:1734px;font-size:26px;transform:scaleX(0.9872);-webkit-text-stroke:0.75px currentColor;">00:00 - 00:00 (00:00)</span>
<a class="t" style="left:1425.87px;top:1734px;font-size:26px;color:#2a7560;transform:scaleX(0.9686);">Vorgang XYZ</a>
<div class="bar" style="left:342px;top:1792px;width:600px"></div>
<div class="plus" style="left:618px;top:1772px"></div>
<div class="bar" style="left:1006px;top:1792px;width:600px"></div>
<div class="plus" style="left:1282px;top:1772px"></div>
<div class="bar" style="left:1670px;top:1792px;width:600px"></div>
<div class="plus" style="left:1946px;top:1772px"></div>
<span class="t" style="left:178.08px;top:1806px;font-size:19.5px;font-weight:700;color:#e01e5a;transform:scaleX(0.9625);">30min zu viel</span>
<div class="sum" style="top:1832px"></div>
<span class="t" style="left:202.13px;top:1846px;font-size:22.5px;font-weight:700;transform:scaleX(0.9850);">8:30 Std.</span>
<span class="t" style="left:342.37px;top:1846px;font-size:22.5px;font-weight:700;transform:scaleX(0.9850);">4:00 Std.</span>
<span class="t" style="left:1005.31px;top:1846px;font-size:22.5px;font-weight:700;transform:scaleX(0.9850);">1:30 Std.</span>
<span class="t" style="left:1669.31px;top:1846px;font-size:22.5px;font-weight:700;transform:scaleX(0.9850);">1:00 Std.</span>
<span class="t" style="left:204.56px;top:1908px;font-size:45.0px;font-weight:700;transform:scaleX(0.8692);">FR</span>
<span class="t" style="left:195.75px;top:1950px;font-size:25px;color:#555b62;letter-spacing:0.240px;">21.04.</span>
<svg style="position:absolute;left:270px;top:1912px;" width="24" height="24" viewBox="0 0 24 24"><path d="M7 22v-9.15q-1.275-.35-2.137-1.4Q4 10.4 4 9V2h2v7h1V2h2v7h1V2h2v7q0 1.4-.863 2.450Q10.275 12.500 9 12.850V22Zm10 0v-8h-3V7q0-2.075 1.463-3.537Q16.925 2 19 2v20Z" fill="#2a7560" /></svg>
<svg style="position:absolute;left:270px;top:1944px;" width="24" height="24" viewBox="0 0 24 24"><path d="M8 1h7l6 6v10q0 .83-.59 1.410Q19.830 19 19 19H8q-.830 0-1.410-.590Q6 17.830 6 17V3q0-.830.590-1.410Q7.170 1 8 1zm0 2v14h11V8h-5V3zM2 7h2v14h11v2H4q-.830 0-1.410-.590Q2 21.830 2 21z" fill="#2a7560" /></svg>
<svg style="position:absolute;left:270px;top:1976px;" width="24" height="24" viewBox="0 0 24 24"><path d="M4 19h16v2H4zM20 3H4v10c0 2.210 1.790 4 4 4h6c2.210 0 4-1.790 4-4v-3h2c1.110 0 2-.9 2-2V5c0-1.110-.890-2-2-2zm-4 10c0 1.100-.9 2-2 2H8c-1.100 0-2-.9-2-2V5h10v8zm4-5h-2V5h2v3z" fill="#2a7560" /></svg>
<div class="entry" style="left:1006px;top:1912px;width:600px"></div>
<svg style="position:absolute;left:1018px;top:1926px;" width="32" height="32" viewBox="0 0 24 24"><path d="M14.06 9.02l.92.92L5.92 19H5v-.92l9.06-9.06M17.66 3c-.25 0-.51.1-.7.29l-1.83 1.83 3.75 3.75 1.83-1.83c.39-.39.39-1.02 0-1.41l-2.34-2.34c-.2-.2-.45-.29-.71-.29zm-3.6 3.19L3 17.25V21h3.75L17.81 9.94l-3.75-3.75z" fill="#2a7560" /></svg>
<svg style="position:absolute;left:1058px;top:1926px;" width="32" height="32" viewBox="0 0 24 24"><path d="M9 3h6v1h5v2h-1v13q0 .83-.59 1.41Q17.83 21 17 21H7q-.83 0-1.41-.59Q5 19.830 5 19V6H4V4h5zM7 6v13h10V6zM9.4 16.5L8 15.1l2.6-2.6L8 9.9l1.4-1.4 2.6 2.6 2.6-2.6L16 9.900l-2.600 2.600 2.600 2.600-1.400 1.400-2.600-2.600z" fill="#2a7560" /></svg>
<span class="t" style="left:1137.74px;top:1930px;font-size:26px;transform:scaleX(0.9872);-webkit-text-stroke:0.75px currentColor;">00:00 - 00:00 (00:00)</span>
<a class="t" style="left:1425.87px;top:1930px;font-size:26px;color:#2a7560;transform:scaleX(0.9686);">Vorgang XYZ</a>
</div></div>
<div id="panel"><div id="panelin">
<span class="t" style="left:2196.05px;top:37px;font-size:26.0px;font-weight:700;transform:scaleX(0.9577);">Zeit erfassen</span>
<div style="position:absolute;left:2800px;top:16px;width:64px;height:64px;border-radius:32px;background:#f3f5f5"></div>
<svg style="position:absolute;left:2816px;top:32px;" width="32" height="32" viewBox="0 0 32 32"><path d="M3 3 L29 29 M29 3 L3 29" fill="none" stroke="#2a7560" stroke-width="3.600"/></svg>
<span class="t" style="left:2199.24px;top:136px;font-size:26.0px;font-weight:700;letter-spacing:0.214px;">Datum</span>
<div style="position:absolute;left:2288px;top:139px;width:20px;height:20px;box-sizing:border-box;border:2px solid #495057;border-radius:10px"></div>
<span class="t" style="left:2293.55px;top:142px;font-size:14.5px;font-weight:700;">?</span>
<span class="t" style="left:2560.84px;top:140px;font-size:22.5px;color:#2a7560;letter-spacing:0.423px;">Heute</span>
<div class="inp" style="left:2196px;top:170px;width:430px;height:48px"></div>
<span class="t" style="left:2204.14px;top:182px;font-size:26px;transform:scaleX(0.9597);">Di, 02.05.2023</span>
<svg style="position:absolute;left:2583.7px;top:177.6px;" width="36" height="36" viewBox="0 0 24 24"><path d="M19 3h-1V1h-2v2H8V1H6v2H5c-1.110 0-2 .9-2 2v14c0 1.100.890 2 2 2h14c1.100 0 2-.9 2-2V5c0-1.100-.9-2-2-2zm0 16H5V8h14v11z" fill="#495057"/></svg>
<span class="t" style="left:2203.81px;top:274px;font-size:26.0px;font-weight:700;transform:scaleX(0.9852);">Von</span>
<span class="t" style="left:2329.36px;top:278px;font-size:22.5px;color:#2a7560;letter-spacing:0.244px;">Jetzt</span>
<div class="inp" style="left:2196px;top:308px;width:189.3px;height:48px"></div>
<span class="t" style="left:2204.33px;top:320px;font-size:26px;transform:scaleX(0.9591);">15:00</span>
<svg style="position:absolute;left:2354px;top:318px;" width="16" height="28" viewBox="0 0 16 28"><path d="M3 9 L8 4 L13 9 M3 19.500 L8 24.500 L13 19.500" fill="none" stroke="#495057" stroke-width="2.900"/></svg>
<span class="t" style="left:2441.70px;top:274px;font-size:26.0px;font-weight:700;transform:scaleX(0.9114);">Bis</span>
<span class="t" style="left:2568.66px;top:278px;font-size:22.5px;color:#2a7560;letter-spacing:0.444px;">Jetzt</span>
<div class="inp" style="left:2434px;top:308px;width:189.3px;height:48px"></div>
<span class="t" style="left:2442.29px;top:320px;font-size:26px;transform:scaleX(0.9817);">18:30</span>
<svg style="position:absolute;left:2591.5px;top:318px;" width="16" height="28" viewBox="0 0 16 28"><path d="M3 9 L8 4 L13 9 M3 19.500 L8 24.500 L13 19.500" fill="none" stroke="#495057" stroke-width="2.900"/></svg>
<span class="t" style="left:2679.27px;top:274px;font-size:26.0px;font-weight:700;transform:scaleX(0.9865);">Dauer</span>
<div class="inp" style="left:2672px;top:308px;width:189.3px;height:48px"></div>
<span class="t" style="left:2680.99px;top:320px;font-size:26px;transform:scaleX(0.9707);">03:30</span>
<svg style="position:absolute;left:2829.5px;top:318px;" width="16" height="28" viewBox="0 0 16 28"><path d="M3 9 L8 4 L13 9 M3 19.500 L8 24.500 L13 19.500" fill="none" stroke="#495057" stroke-width="2.900"/></svg>
<span class="t" style="left:2203.05px;top:412px;font-size:26.0px;font-weight:700;transform:scaleX(0.9970);">Projekt</span>
<span class="t" style="left:2639.94px;top:416px;font-size:22.5px;color:#2a7560;letter-spacing:0.093px;">Arbeitspakete wählen</span>
<div class="inp" style="left:2196px;top:446px;width:668px;height:48px"></div>
<span class="t" style="left:2204.05px;top:458px;font-size:26px;letter-spacing:0.445px;">Musterprojekt</span>
<svg style="position:absolute;left:2828px;top:458px;" width="24" height="24" viewBox="0 0 24 24"><path d="M5.200 8.600 L12 15.400 L18.800 8.600" fill="none" stroke="#495057" stroke-width="2.800"/></svg>
<span class="t" style="left:2203.81px;top:550px;font-size:26.0px;font-weight:700;transform:scaleX(0.9695);">Vorgang</span>
<div class="inp" style="left:2196px;top:584px;width:668px;height:48px"></div>
<span class="t" style="left:2204.28px;top:596px;font-size:26px;transform:scaleX(0.9831);">1 Analyse</span>
<svg style="position:absolute;left:2828px;top:596px;" width="24" height="24" viewBox="0 0 24 24"><path d="M5.200 8.600 L12 15.400 L18.800 8.600" fill="none" stroke="#495057" stroke-width="2.800"/></svg>
<span class="t" style="left:2204.55px;top:688px;font-size:26.0px;font-weight:700;transform:scaleX(0.9705);">Tätigkeit</span>
<span class="t" style="left:2788.90px;top:692px;font-size:22.5px;color:#2a7560;transform:scaleX(0.9690);">Reisen</span>
<div class="inp" style="left:2196px;top:722px;width:668px;height:48px"></div>
<span class="t" style="left:2205.34px;top:734px;font-size:26px;letter-spacing:0.250px;">vw (Verwaltung)</span>
<svg style="position:absolute;left:2828px;top:734px;" width="24" height="24" viewBox="0 0 24 24"><path d="M5.200 8.600 L12 15.400 L18.800 8.600" fill="none" stroke="#495057" stroke-width="2.800"/></svg>
<div style="position:absolute;left:2208px;top:830px;width:24px;height:24px;border-radius:4px;background:#495057"></div>
<svg style="position:absolute;left:2208px;top:830px;" width="24" height="24" viewBox="0 0 24 24"><path d="M4.300 12.300 L9.600 17.400 L19.700 7.100" fill="none" stroke="#fff" stroke-width="2.700"/></svg>
<span class="t" style="left:2252.41px;top:830px;font-size:26px;letter-spacing:0.635px;">fakturierbar</span>
<span class="t" style="left:2203.07px;top:921px;font-size:26.0px;font-weight:700;transform:scaleX(0.9867);">Bemerkung</span>
<span class="t" style="left:2792.48px;top:925px;font-size:22.5px;color:#2a7560;letter-spacing:0.366px;">leeren</span>
<div class="inp" style="left:2196px;top:956px;width:668px;height:240px"></div>
<div style="position:absolute;left:2196px;top:1244px;width:152px;height:48px;background:#2a7560;border-radius:9px"></div>
<span class="t" style="left:2211.63px;top:1256px;font-size:26px;color:#fff;letter-spacing:0.204px;">Speichern</span>
</div></div>
</body></html>
